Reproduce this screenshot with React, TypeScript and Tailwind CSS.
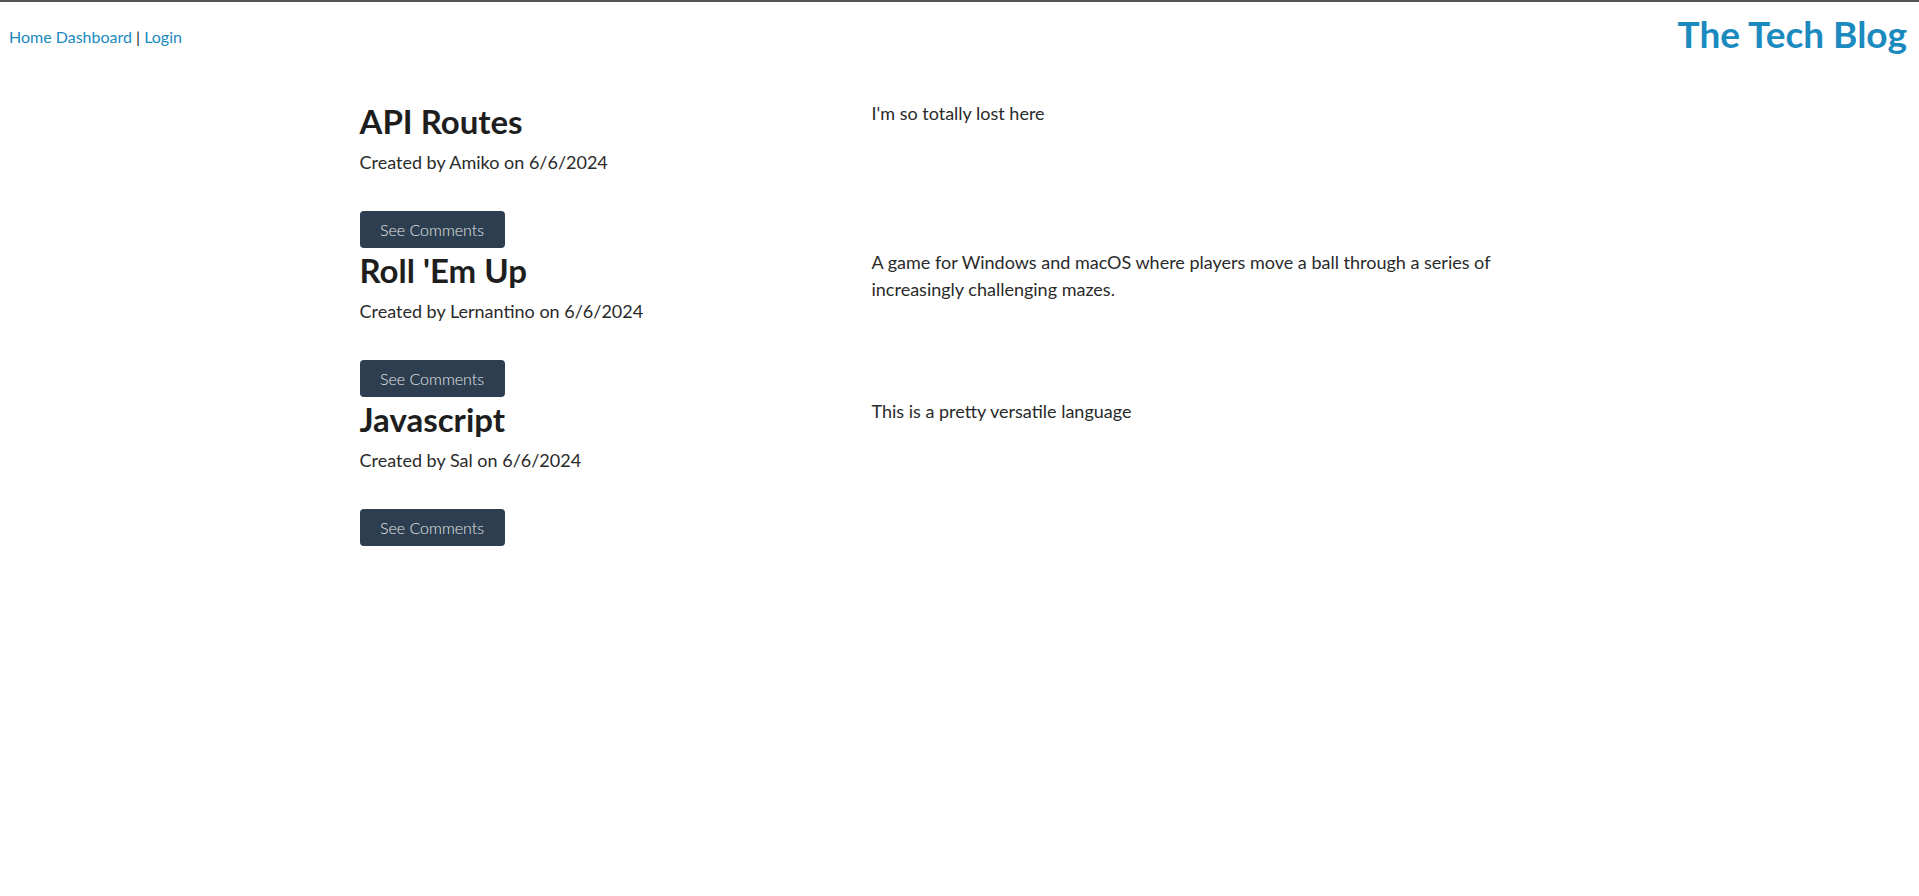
const posts = [
  {
    title: "API Routes",
    author: "Amiko",
    date: "6/6/2024",
    body: "I'm so totally lost here",
  },
  {
    title: "Roll 'Em Up",
    author: "Lernantino",
    date: "6/6/2024",
    body: "A game for Windows and macOS where players move a ball through a series of increasingly challenging mazes.",
  },
  {
    title: "Javascript",
    author: "Sal",
    date: "6/6/2024",
    body: "This is a pretty versatile language",
  },
]

export default function App() {
  return (
    <div className="min-h-[896px] bg-white border-t-2 border-[#555555] font-['Lato','Open_Sans',sans-serif] text-[#1e1e1e]">
      <header className="flex items-start justify-between pl-[9px] pr-[12px] pt-[10px]">
        <nav className="pt-[13px] text-[16px] text-[#1a8ac0]">
          <a href="#">Home</a> <a href="#">Dashboard</a>
          <span className="text-[#1e1e1e]"> | </span>
          <a href="#">Login</a>
        </nav>
        <h1 className="text-[37px] font-bold leading-[1.2] text-[#1a8abf]">The Tech Blog</h1>
      </header>

      <main className="mx-auto mt-[46px] w-[1200px]">
        {posts.map((post) => (
          <PostRow key={post.title} {...post} />
        ))}
      </main>
    </div>
  )
}

function PostRow({ title, author, date, body }: { title: string; author: string; date: string; body: string }) {
  return (
    <section className="grid grid-cols-[512px_658px] h-[149px]">
      <div className="flex flex-col">
        <h2 className="text-[33px] font-bold leading-[38px] text-[#1e1e1e]">{title}</h2>
        <p className="mt-[9px] text-[18px] leading-[27px] text-[#2a2a2a]">
          Created by {author} on {date}
        </p>
        <div className="mt-[35px]">
          <button className="h-[37px] w-[145px] rounded-[4px] bg-[#2c3e50] text-[16px] font-light text-[#e6e6e6]">
            See Comments
          </button>
        </div>
      </div>
      <p className="-mt-[2px] text-[18px] leading-[27px] text-[#2a2a2a]">{body}</p>
    </section>
  )
}
